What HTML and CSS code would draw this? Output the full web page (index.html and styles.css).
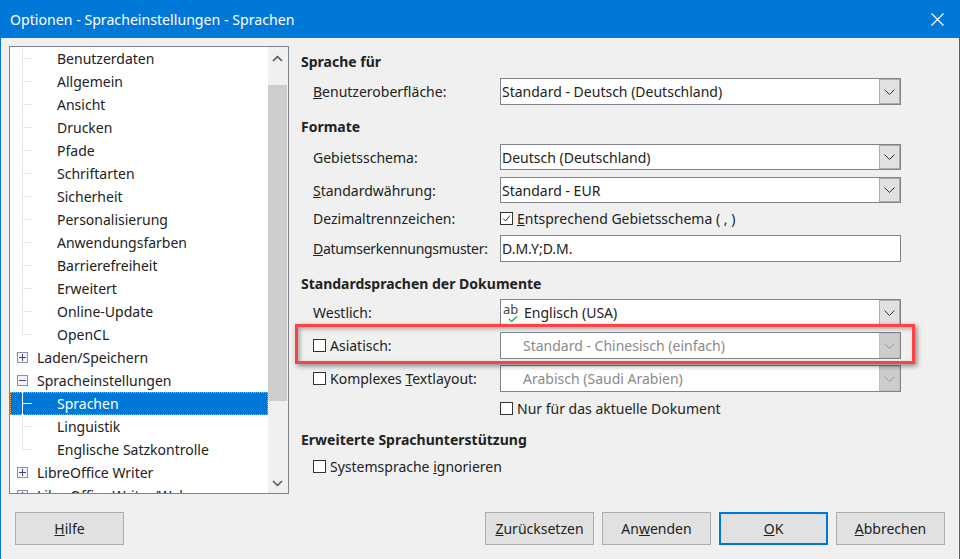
FILE: index.html
```html
<!DOCTYPE html>
<html lang="de">
<head>
<meta charset="utf-8">
<title>Optionen - Spracheinstellungen - Sprachen</title>
<link rel="stylesheet" href="styles.css">
</head>
<body>
<div class="window">
  <header class="titlebar">
    <span class="title">Optionen - Spracheinstellungen - Sprachen</span>
    <svg class="close" width="13" height="13" viewBox="0 0 13 13"><path d="M.5.5l12 12M12.5.5l-12 12" stroke="#fff" stroke-width="1.1" fill="none"/></svg>
  </header>
  <div class="main">
    <nav class="tree">
      <div class="tree-list">
        <div class="node leaf"><i class="guide"></i>Benutzerdaten</div>
        <div class="node leaf"><i class="guide"></i>Allgemein</div>
        <div class="node leaf"><i class="guide"></i>Ansicht</div>
        <div class="node leaf"><i class="guide"></i>Drucken</div>
        <div class="node leaf"><i class="guide"></i>Pfade</div>
        <div class="node leaf"><i class="guide"></i>Schriftarten</div>
        <div class="node leaf"><i class="guide"></i>Sicherheit</div>
        <div class="node leaf"><i class="guide"></i>Personalisierung</div>
        <div class="node leaf"><i class="guide"></i>Anwendungsfarben</div>
        <div class="node leaf"><i class="guide"></i>Barrierefreiheit</div>
        <div class="node leaf"><i class="guide"></i>Erweitert</div>
        <div class="node leaf"><i class="guide"></i>Online-Update</div>
        <div class="node leaf"><i class="guide guide-end"></i>OpenCL</div>
        <div class="node parent"><svg class="expander" width="11" height="11" viewBox="0 0 11 11"><rect x=".5" y=".5" width="10" height="10" fill="#f4f4f8" stroke="#8f8f9d"/><path d="M2 5.5h7M5.5 2v7" stroke="#35498f"/></svg>Laden/Speichern</div>
        <div class="node parent"><svg class="expander" width="11" height="11" viewBox="0 0 11 11"><rect x=".5" y=".5" width="10" height="10" fill="#f4f4f8" stroke="#8f8f9d"/><path d="M2 5.5h7" stroke="#35498f"/></svg>Spracheinstellungen</div>
        <div class="node leaf selected"><i class="guide"></i>Sprachen</div>
        <div class="node leaf"><i class="guide"></i>Linguistik</div>
        <div class="node leaf"><i class="guide guide-end"></i>Englische Satzkontrolle</div>
        <div class="node parent"><svg class="expander" width="11" height="11" viewBox="0 0 11 11"><rect x=".5" y=".5" width="10" height="10" fill="#f4f4f8" stroke="#8f8f9d"/><path d="M2 5.5h7M5.5 2v7" stroke="#35498f"/></svg>LibreOffice Writer</div>
        <div class="node parent"><svg class="expander" width="11" height="11" viewBox="0 0 11 11"><rect x=".5" y=".5" width="10" height="10" fill="#f4f4f8" stroke="#8f8f9d"/><path d="M2 5.5h7M5.5 2v7" stroke="#35498f"/></svg>LibreOffice Writer/Web</div>
      </div>
      <div class="scrollbar">
        <svg class="scroll-up" width="11" height="7" viewBox="0 0 11 7"><path d="M1 6l4.500-4.500L10 6" stroke="#505050" stroke-width="1.500" fill="none"/></svg>
        <div class="thumb"></div>
        <svg class="scroll-down" width="11" height="7" viewBox="0 0 11 7"><path d="M1 1l4.500 4.500L10 1" stroke="#505050" stroke-width="1.500" fill="none"/></svg>
      </div>
    </nav>
    <section class="panel">
      <h2 class="heading first">Sprache für</h2>
      <div class="row r-first"><label class="label"><u>B</u>enutzeroberfläche:</label>
        <div class="combo"><span class="value">Standard - Deutsch (Deutschland)</span><span class="arrow"><svg width="11" height="6" viewBox="0 0 11 6"><path d="M.5.5l5 5 5-5" stroke="#333" fill="none"/></svg></span></div>
      </div>
      <h2 class="heading h-formate">Formate</h2>
      <div class="row short r-formate"><label class="label">Gebietsschema:</label>
        <div class="combo"><span class="value">Deutsch (Deutschland)</span><span class="arrow"><svg width="11" height="6" viewBox="0 0 11 6"><path d="M.5.5l5 5 5-5" stroke="#333" fill="none"/></svg></span></div>
      </div>
      <div class="row short r-currency"><label class="label"><u>S</u>tandardwährung:</label>
        <div class="combo"><span class="value">Standard - EUR</span><span class="arrow"><svg width="11" height="6" viewBox="0 0 11 6"><path d="M.5.5l5 5 5-5" stroke="#333" fill="none"/></svg></span></div>
      </div>
      <div class="row r-dez"><label class="label">Dezimaltrennzeichen:</label>
        <div class="check-field"><span class="box"><svg width="11" height="11" viewBox="0 0 11 11"><path d="M2 5.500l2.500 2.500L9 2.500" stroke="#333" fill="none"/></svg></span><span><u>E</u>ntsprechend Gebietsschema ( , )</span></div>
      </div>
      <div class="row r-datum"><label class="label narrow"><u>D</u>atumserkennungsmuster:</label>
        <div class="input">D.M.Y;D.M.</div>
      </div>
      <h2 class="heading h-docs">Standardsprachen der Dokumente</h2>
      <div class="row r-west"><label class="label">Westlich:</label>
        <div class="combo"><span class="value lang-value"><span class="spell"><span class="spell-ab">ab</span><svg class="spell-tick" width="10" height="6" viewBox="0 0 10 6"><path d="M1 3l2.500 2.500L9 .5" stroke="#2aa84a" stroke-width="1.200" fill="none"/></svg></span>Englisch (USA)</span><span class="arrow"><svg width="11" height="6" viewBox="0 0 11 6"><path d="M.5.5l5 5 5-5" stroke="#333" fill="none"/></svg></span></div>
      </div>
      <div class="row"><label class="label check-label"><span class="box"></span>Asiatisch:</label>
        <div class="combo disabled"><span class="value indented">Standard - Chinesisch (einfach)</span><span class="arrow"><svg width="11" height="6" viewBox="0 0 11 6"><path d="M.5.5l5 5 5-5" stroke="#999" fill="none"/></svg></span></div>
      </div>
      <div class="row"><label class="label check-label"><span class="box"></span><span>Komplexes <u>T</u>extlayout:</span></label>
        <div class="combo disabled"><span class="value indented">Arabisch (Saudi Arabien)</span><span class="arrow"><svg width="11" height="6" viewBox="0 0 11 6"><path d="M.5.5l5 5 5-5" stroke="#999" fill="none"/></svg></span></div>
      </div>
      <div class="row r-nur"><span class="label"></span>
        <div class="check-field"><span class="box"></span><span>Nur für das aktuelle Dokument</span></div>
      </div>
      <h2 class="heading h-ext">Erweiterte Sprachunterstützung</h2>
      <div class="row r-sys"><label class="label check-label"><span class="box"></span><span>Systemsprache <u>i</u>gnorieren</span></label></div>
    </section>
  </div>
  <footer class="footer">
    <button class="btn"><u>H</u>ilfe</button>
    <div class="actions">
      <button class="btn"><u>Z</u>urücksetzen</button>
      <button class="btn">An<u>w</u>enden</button>
      <button class="btn default"><u>O</u>K</button>
      <button class="btn"><u>A</u>bbrechen</button>
    </div>
  </footer>
  <div class="callout"></div>
</div>
</body>
</html>
```
FILE: styles.css
```css
* { box-sizing: border-box; }
html, body { margin: 0; padding: 0; }
body {
  width: 960px; height: 559px; overflow: hidden;
  font-family: "Noto Sans", "Open Sans", sans-serif;
  font-size: 14px; color: #222;
}
.window {
  position: relative;
  width: 960px; height: 559px;
  background: #f0f0f0;
  border-left: 1px solid #0078d7; border-right: 1px solid #0078d7;
  display: flex; flex-direction: column;
}
.titlebar {
  height: 38px; flex: none; background: #0078d7; color: #fff;
  display: flex; align-items: center; justify-content: space-between;
  padding: 0 15px 0 9px;
  font-size: 14.150px;
}
.main { display: flex; height: 474px; flex: none; }

.tree {
  margin: 8px 0 0 8px; width: 280px; height: 448px; flex: none;
  border: 1px solid #82828c; background: #fff;
  display: flex; overflow: hidden;
}
.tree-list { flex: 1; min-width: 0; overflow: hidden; }
.node { height: 23px; display: flex; align-items: center; white-space: nowrap; }
.node.parent { padding-left: 7px; }
.expander { margin-right: 9px; flex: none; }
.guide {
  width: 47px; height: 23px; flex: none;
  background:
    linear-gradient(#e8e8e8, #e8e8e8) 12px 0 / 1px 100% no-repeat,
    linear-gradient(#e8e8e8, #e8e8e8) 12px 11px / 10px 1px no-repeat;
}
.guide-end {
  background:
    linear-gradient(#e8e8e8, #e8e8e8) 12px 0 / 1px 12px no-repeat,
    linear-gradient(#e8e8e8, #e8e8e8) 12px 11px / 10px 1px no-repeat;
}
.selected {
  background: #0078d7; color: #fff;
  outline: 1px dotted #e8a84a; outline-offset: -1px;
}
.selected .guide {
  background:
    linear-gradient(#fff, #fff) 12px 0 / 1px 100% no-repeat,
    linear-gradient(#fff, #fff) 12px 11px / 10px 1px no-repeat;
}
.scrollbar {
  width: 20px; flex: none; background: #f0f0f0;
  display: flex; flex-direction: column; align-items: center;
  padding-right: 1px;
}
.scroll-up { margin-top: 8px; flex: none; }
.thumb { width: 19px; height: 316px; margin-top: 23px; background: #cdcdcd; flex: none; }
.scroll-down { margin-top: 79px; flex: none; }

.panel { margin-left: 12px; width: 600px; flex: none; }
.heading { margin: 0; height: 20px; line-height: 20px; font-size: 14px; font-weight: 700; }
.first { margin-top: 14px; }
.h-formate { margin-top: 12px; }
.h-docs { margin-top: 12px; }
.h-ext { margin-top: 8px; }
.row { display: flex; align-items: center; height: 27px; margin-top: 6px; }
.short { height: 26px; }
.short .combo { height: 26px; }
.r-formate { margin-top: 7px; }
.r-currency { margin-top: 7px; }
.r-dez { margin-top: 2px; }
.r-datum { margin-top: 3px; }
.r-west { margin-top: 5px; }
.r-nur { margin-top: 3px; }
.r-sys { margin-top: 3px; }
.label { width: 199px; padding-left: 12px; flex: none; white-space: nowrap; }
.narrow { letter-spacing: -.3px; }
.check-label { display: flex; align-items: center; }
.box {
  width: 13px; height: 13px; border: 1px solid #333; background: #fff;
  flex: none; margin-right: 4px;
  display: flex; align-items: center; justify-content: center;
}
.combo, .input {
  width: 401px; height: 27px;
  border: 1px solid #82828c; background: #fff;
  display: flex; align-items: center; flex: none;
}
.value { flex: 1; padding-left: 1px; display: flex; align-items: center; white-space: nowrap; }
.input { padding-left: 1px; }
.arrow {
  width: 21px; height: 100%; flex: none;
  background: #e1e1e1; border: 1px solid #adadad;
  display: flex; align-items: center; justify-content: center;
}
.disabled .value { color: #8a8a8a; }
.disabled .arrow { background: #cccccc; border-color: #bfbfbf; }
.indented { padding-left: 22px; }
.lang-value { padding-left: 2px; }
.spell { width: 19px; height: 19px; flex: none; margin-right: 2px; display: flex; flex-direction: column; }
.spell-ab { font-size: 13px; line-height: 13px; color: #444; }
.spell-tick { margin-left: 5px; flex: none; }
.check-field { display: flex; align-items: center; white-space: nowrap; }
.check-field .box { margin-right: 4px; }

.footer {
  flex: none; display: flex; justify-content: space-between;
  padding: 0 14px 0 14px;
}
.actions { display: flex; gap: 8px; }
.btn {
  width: 109px; height: 33px; padding: 0;
  background: #e1e1e1; border: 1px solid #adadad; color: #222;
  font: inherit;
}
.default { border: 2px solid #0078d7; }

.callout {
  position: absolute; left: 294px; top: 324px; width: 620px; height: 40px;
  border: 3px solid #fb4343;
  box-shadow: 2px 2px 5px rgba(0,0,0,.45), inset 2px 2px 4px rgba(0,0,0,.3);
}
```
